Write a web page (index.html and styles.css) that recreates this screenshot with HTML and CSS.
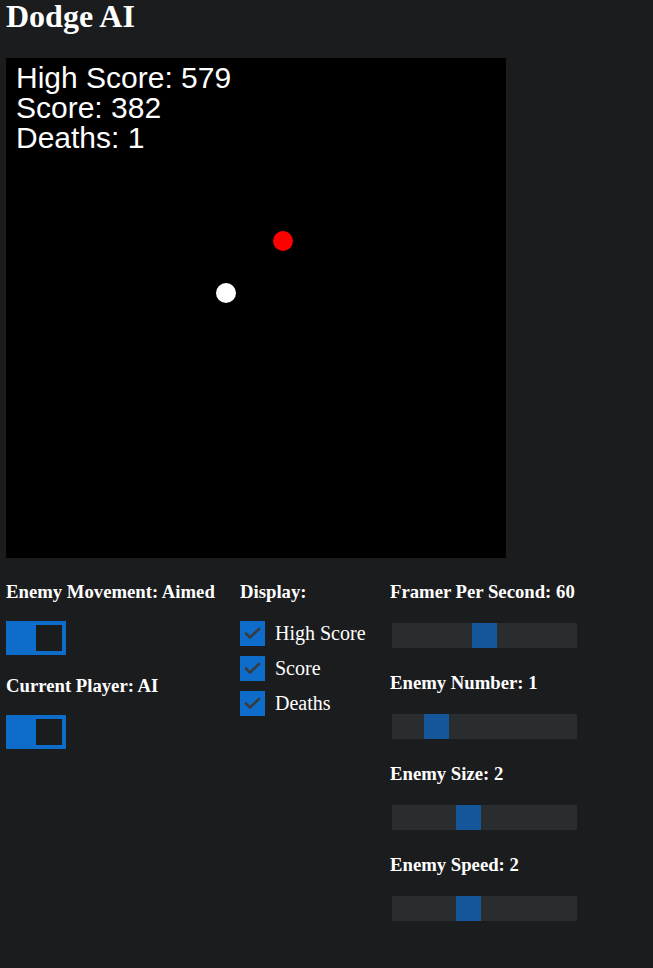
FILE: index.html
```html
<!DOCTYPE html>
<html>
<head>
<meta charset="utf-8">
<title>Dodge AI</title>
<link rel="stylesheet" href="styles.css">
</head>
<body>
<div class="page">
  <h1 class="title">Dodge AI</h1>
  <svg class="game" width="500" height="500" viewBox="0 0 500 500">
    <rect x="0" y="0" width="500" height="500" fill="#000"/>
    <text class="hud" x="10" y="30">High Score: 579</text>
    <text class="hud" x="10" y="60">Score: 382</text>
    <text class="hud" x="10" y="90">Deaths: 1</text>
    <circle cx="277" cy="183" r="10" fill="#ff0000"/>
    <circle cx="220" cy="235" r="10" fill="#ffffff"/>
  </svg>

  <div class="controls">
    <div class="col col-toggles">
      <h3 class="label">Enemy Movement: Aimed</h3>
      <div class="toggle"><div class="knob"></div></div>
      <h3 class="label">Current Player: AI</h3>
      <div class="toggle"><div class="knob"></div></div>
    </div>

    <div class="col col-display">
      <h3 class="label">Display:</h3>
      <div class="checks">
        <div class="check-row">
          <span class="box"><svg width="25" height="25" viewBox="0 0 25 25"><path d="M6 12.5 L10 16.5 L19 8" fill="none" stroke="#3a3b3d" stroke-width="2.6" stroke-linecap="round" stroke-linejoin="round"/></svg></span>
          <span class="check-text">High Score</span>
        </div>
        <div class="check-row">
          <span class="box"><svg width="25" height="25" viewBox="0 0 25 25"><path d="M6 12.5 L10 16.5 L19 8" fill="none" stroke="#3a3b3d" stroke-width="2.6" stroke-linecap="round" stroke-linejoin="round"/></svg></span>
          <span class="check-text">Score</span>
        </div>
        <div class="check-row">
          <span class="box"><svg width="25" height="25" viewBox="0 0 25 25"><path d="M6 12.5 L10 16.5 L19 8" fill="none" stroke="#3a3b3d" stroke-width="2.6" stroke-linecap="round" stroke-linejoin="round"/></svg></span>
          <span class="check-text">Deaths</span>
        </div>
      </div>
    </div>

    <div class="col col-sliders">
      <div class="slider-group">
        <h3 class="label">Framer Per Second: 60</h3>
        <div class="track"><div class="thumb" style="margin-left:80px"></div></div>
      </div>
      <div class="slider-group">
        <h3 class="label">Enemy Number: 1</h3>
        <div class="track"><div class="thumb" style="margin-left:32px"></div></div>
      </div>
      <div class="slider-group">
        <h3 class="label">Enemy Size: 2</h3>
        <div class="track"><div class="thumb" style="margin-left:64px"></div></div>
      </div>
      <div class="slider-group">
        <h3 class="label">Enemy Speed: 2</h3>
        <div class="track"><div class="thumb" style="margin-left:64px"></div></div>
      </div>
    </div>
  </div>
</div>
</body>
</html>
```

FILE: styles.css
```css
html, body {
  margin: 0;
  padding: 0;
  background: #1b1c1e;
}

body {
  color: #ffffff;
  font-family: "Liberation Serif", "Times New Roman", serif;
}

.page {
  padding: 0 6px;
}

.title {
  margin: 0;
  font-size: 32px;
  line-height: 33px;
  font-weight: bold;
  height: 58px;
  box-sizing: border-box;
}

.game {
  display: block;
}

.hud {
  fill: #ffffff;
  font-family: "Liberation Sans", Arial, sans-serif;
  font-size: 30px;
}

.controls {
  display: grid;
  grid-template-columns: 234px 150px 200px;
  margin-top: 23px;
}

.col {
  display: flex;
  flex-direction: column;
}

.label {
  margin: 0;
  font-size: 18.72px;
  line-height: 21.5px;
  font-weight: bold;
}

.toggle {
  width: 60px;
  height: 34px;
  box-sizing: border-box;
  padding: 4px;
  background: #0e6dcb;
  display: flex;
  justify-content: flex-end;
  margin: 18.5px 0 19.5px;
}

.knob {
  width: 26px;
  height: 26px;
  background: #1b1c1e;
}

.checks {
  display: flex;
  flex-direction: column;
  gap: 10px;
  margin-top: 18.5px;
}

.check-row {
  display: flex;
  align-items: center;
  gap: 10px;
  height: 25px;
}

.box {
  width: 25px;
  height: 25px;
  background: #0e6dcb;
  display: block;
}

.box svg {
  display: block;
}

.check-text {
  font-size: 20px;
  line-height: 25px;
}

.slider-group {
  display: flex;
  flex-direction: column;
  margin-bottom: 24px;
}

.track {
  width: 185px;
  height: 25px;
  margin: 20.5px 0 0 2px;
  background: #2a2d2f;
  display: flex;
}

.thumb {
  width: 25px;
  height: 25px;
  background: #13579a;
}
```
